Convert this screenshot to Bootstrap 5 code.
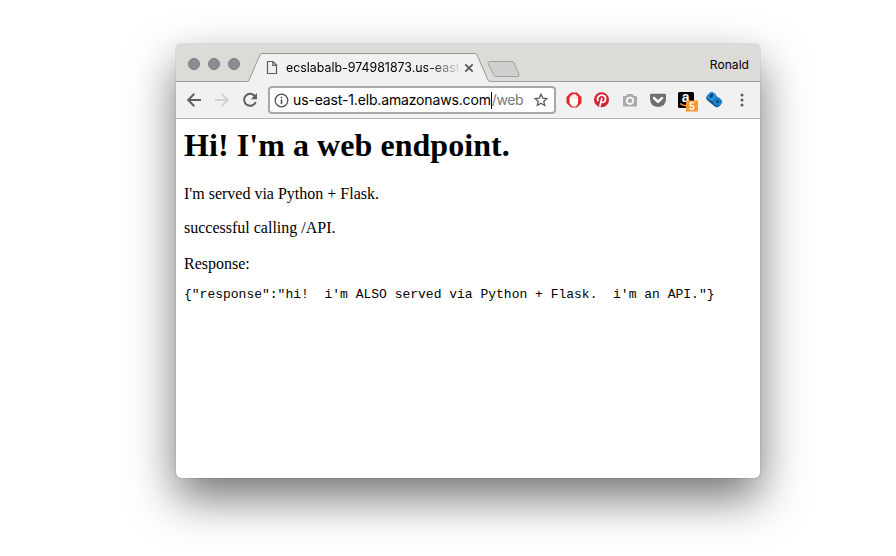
<!DOCTYPE html>
<html lang="en">
<head>
<meta charset="utf-8">
<title>Web endpoint</title>
<link rel="stylesheet" href="https://cdn.jsdelivr.net/npm/bootstrap@5.3.0/dist/css/bootstrap.min.css">
<style>
body{background:#fff;height:556px;overflow:hidden;padding:44px 0 0 176px;color:#000}
.win{width:584px;height:434px;border-radius:5px;background:#fff;box-shadow:0 0 1px rgba(0,0,0,.6),0 20px 46px rgba(0,0,0,.55)}
.chrome{font-family:Inter,Roboto,sans-serif}
.tabstrip{height:38px;background:#dddbd7;border-bottom:1px solid #a09f9d;border-radius:5px 5px 0 0;padding-left:12px}
.light{width:12px;height:12px;border-radius:50%;background:#8e8d91;border:1px solid #7f7e82}
.lights{gap:8px;padding-top:14px}
.tab{width:244px;height:30px;margin:9px 0 -1px 7px}
.tab-shape{position:absolute;left:0;top:0}
.tab-row{padding:0 12px 0 19px;height:29px}
.tab-title{width:174px;margin-left:8px;font-size:12.4px;line-height:16px;white-space:nowrap;-webkit-mask-image:linear-gradient(90deg,#000 82%,transparent 101%);mask-image:linear-gradient(90deg,#000 82%,transparent 101%)}
.newtab{margin:16px 0 0 -5px}
.user{font-size:12.1px;line-height:16px;margin:13px 11px 0 auto}
.tools{height:37px;background:#f1f1f1;border-bottom:1px solid #b4b4b4;padding:0 4px}
.cell{width:28px;height:28px;flex:none}
.omni{width:288px;height:28px;border:2px solid #a8a8a8;border-radius:4px;background:#fff;margin:0 4px;padding:0 6px 0 4px}
.addr{font-size:14px;line-height:20px;letter-spacing:-.15px;margin-left:4px;white-space:nowrap}
.caret{width:1px;height:17px;background:#000}
.path{color:#777;letter-spacing:-.4px}
.page-body{font-family:"Liberation Serif",serif;font-size:16px;line-height:18px;padding:8px}
.page-body h1{font-size:32px;font-weight:700;line-height:37px;letter-spacing:.06px;margin:0 0 21px}
.page-body p{margin:0 0 16px}
.page-body .label{margin-top:18px}
.page-body pre{font:13px/15px "Liberation Mono",monospace;margin:-2px 0 0;color:#000;overflow:visible}
</style>
<script src="https://cdn.jsdelivr.net/npm/bootstrap@5.3.0/dist/js/bootstrap.bundle.min.js"></script>
</head>
<body>
<div class="win">
 <header class="chrome">
  <div class="tabstrip d-flex align-items-start">
   <div class="lights d-flex"><span class="light"></span><span class="light"></span><span class="light"></span></div>
   <div class="tab position-relative">
    <svg class="tab-shape" width="244" height="30"><path d="M.5 28.5Q1.500 28.500 2 27L13 2Q13.500.5 15 .5H228Q229.500.5 230 2L241 27Q241.500 28.500 243 28.500V30H.5Z" fill="#f1f1f1"/><path d="M.5 28.500Q1.500 28.500 2 27L13 2Q13.500.5 15 .5H228Q229.500.5 230 2L241 27Q241.500 28.500 243 28.500" fill="none" stroke="#999896"/></svg>
    <div class="tab-row position-relative d-flex align-items-center">
     <svg width="12" height="15" fill="none" stroke="#5d5d5d" stroke-width="1.200"><path d="M1.500 1.500H7L10.500 5V13.500H1.500ZM6.800 1.500V5.300H10.500"/></svg>
     <div class="tab-title">ecslabalb-974981873.us-east</div>
     <svg class="ms-1" width="10" height="10" stroke="#555" stroke-width="1.700"><path d="M1.300 1.300 8.700 8.700M8.700 1.300 1.300 8.700"/></svg>
    </div>
   </div>
   <svg class="newtab" width="35" height="18"><path d="M3.500 1.500H26Q27.500 1.500 28.200 3L33 14.500Q33.500 16.500 32 16.500H10Q8.500 16.500 7.500 14.500L2 3.500Q1.500 1.500 3.500 1.500Z" fill="#cfcfcf" stroke="#a2a1a0"/></svg>
   <div class="user">Ronald</div>
  </div>
  <div class="tools d-flex align-items-center">
   <svg class="cell" viewBox="0 0 28 28" fill="none" stroke="#5f5f5f" stroke-width="2"><path d="M21 14H8.500M14.300 7.800 8.200 14l6.100 6.200"/></svg>
   <svg class="cell" viewBox="0 0 28 28" fill="none" stroke="#d2d2d2" stroke-width="2"><path d="M7 14H19.500M13.700 7.800 19.800 14l-6.100 6.200"/></svg>
   <svg class="cell" viewBox="0 0 28 28"><path d="M18.800 10A6 6 0 1 0 19.700 16" fill="none" stroke="#5f5f5f" stroke-width="2"/><path d="M21 7V13.200H14.800Z" fill="#5f5f5f"/></svg>
   <div class="omni d-flex align-items-center">
    <svg width="15" height="15" fill="none" stroke="#505050"><circle cx="7.500" cy="7.500" r="6.300" stroke-width="1.300"/><path d="M7.500 6.500V11M7.500 3.800V5.300" stroke-width="1.600"/></svg>
    <div class="addr d-flex align-items-center"><span class="host">us-east-1.elb.amazonaws.com</span><span class="caret"></span><span class="path">/web</span></div>
    <svg class="ms-auto" width="14" height="14" viewBox="0 0 14 14"><path d="M7 1.200 8.700 5.100 13 5.500 9.800 8.300 10.700 12.500 7 10.300 3.300 12.500 4.200 8.300 1 5.500 5.300 5.100Z" fill="none" stroke="#5c5c5c" stroke-width="1.300"/></svg>
   </div>
   <svg class="cell" viewBox="0 0 28 28"><path d="M11 6.500H17L21.500 11V17L17 21.500H11L6.500 17V11Z" fill="#e3262c"/><path d="M9.500 12.500 10.500 10 12 9 14 8 16 8.800 17.800 10.500 18.200 14 17.800 18 16 20.500H12L9.800 17.500Z" fill="#fff"/><path d="M12 9.500V13M14.300 8.500V13M16.300 9.500V13" stroke="#f3a0a2" stroke-width=".5"/></svg>
   <svg class="cell" viewBox="0 0 28 28"><circle cx="13.500" cy="13.700" r="7.500" fill="#cf2431"/><path d="M10.300 15.300Q8.600 13 10.400 10.700 12.300 8.700 15 9.300 17.900 10 17.600 13 17 16.500 14.700 16.400 13.300 16.200 13.100 15.100M13.900 11.700 11.800 20.600" fill="none" stroke="#fff" stroke-width="1.700"/></svg>
   <svg class="cell" viewBox="0 0 28 28"><path d="M7.500 10H10L11.500 8H16.500L18 10H20Q21 10 21 11V19.500Q21 20.500 20 20.500H8Q7 20.500 7 19.500V11Q7 10 7.500 10Z" fill="#aaa"/><circle cx="14" cy="14.800" r="3.200" fill="#aaa" stroke="#f7f7f7" stroke-width="1.800"/></svg>
   <svg class="cell" viewBox="0 0 28 28"><path d="M7 7.800H21Q22 7.800 22 8.800V13Q22 20.500 14 21 6 20.500 6 13V8.800Q6 7.800 7 7.800Z" fill="#6f6f6f"/><path d="M10 12 14 15.800 18 12" fill="none" stroke="#fff" stroke-width="2.500" stroke-linecap="round" stroke-linejoin="round"/></svg>
   <svg class="cell" viewBox="0 0 28 28" font-family="Liberation Sans, sans-serif" font-weight="700"><rect x="6" y="6" width="16" height="16" rx="1.500" fill="#000"/><text x="9.700" y="16" font-size="14" fill="#fff">a</text><path d="M8 17.500Q11 20 15 19.700" fill="none" stroke="#ff962c" stroke-width="1.300"/><rect x="14" y="14.500" width="12" height="11" fill="#ff962c"/><text x="17" y="23.600" font-family="Roboto, sans-serif" font-size="10" fill="#fff">5</text></svg>
   <svg class="cell" viewBox="0 0 28 28"><g transform="rotate(40 14 14)"><rect x="6" y="9.500" width="16" height="9" rx="3.500" fill="#0d4c83"/><rect x="6" y="8.500" width="8" height="8.500" rx="3" fill="#2790dc"/><rect x="13.500" y="9" width="8.500" height="8" rx="3" fill="#1b7fca"/><ellipse cx="9.300" cy="12.500" rx="1.600" ry="2.300" fill="#0a3c70"/><circle cx="17.800" cy="13" r="1.500" fill="#0a4b88"/></g></svg>
   <svg class="cell" viewBox="0 0 28 28" fill="#5c5c5c"><circle cx="14" cy="9" r="1.500"/><circle cx="14" cy="14" r="1.500"/><circle cx="14" cy="19" r="1.500"/></svg>
  </div>
 </header>
 <main class="page-body">
  <h1>Hi! I'm a web endpoint.</h1>
  <p>I'm served via Python + Flask.</p>
  <p>successful calling /API.</p>
  <p class="label">Response:</p>
  <pre>{"response":"hi!  i'm ALSO served via Python + Flask.  i'm an API."}</pre>
 </main>
</div>
</body>
</html>
